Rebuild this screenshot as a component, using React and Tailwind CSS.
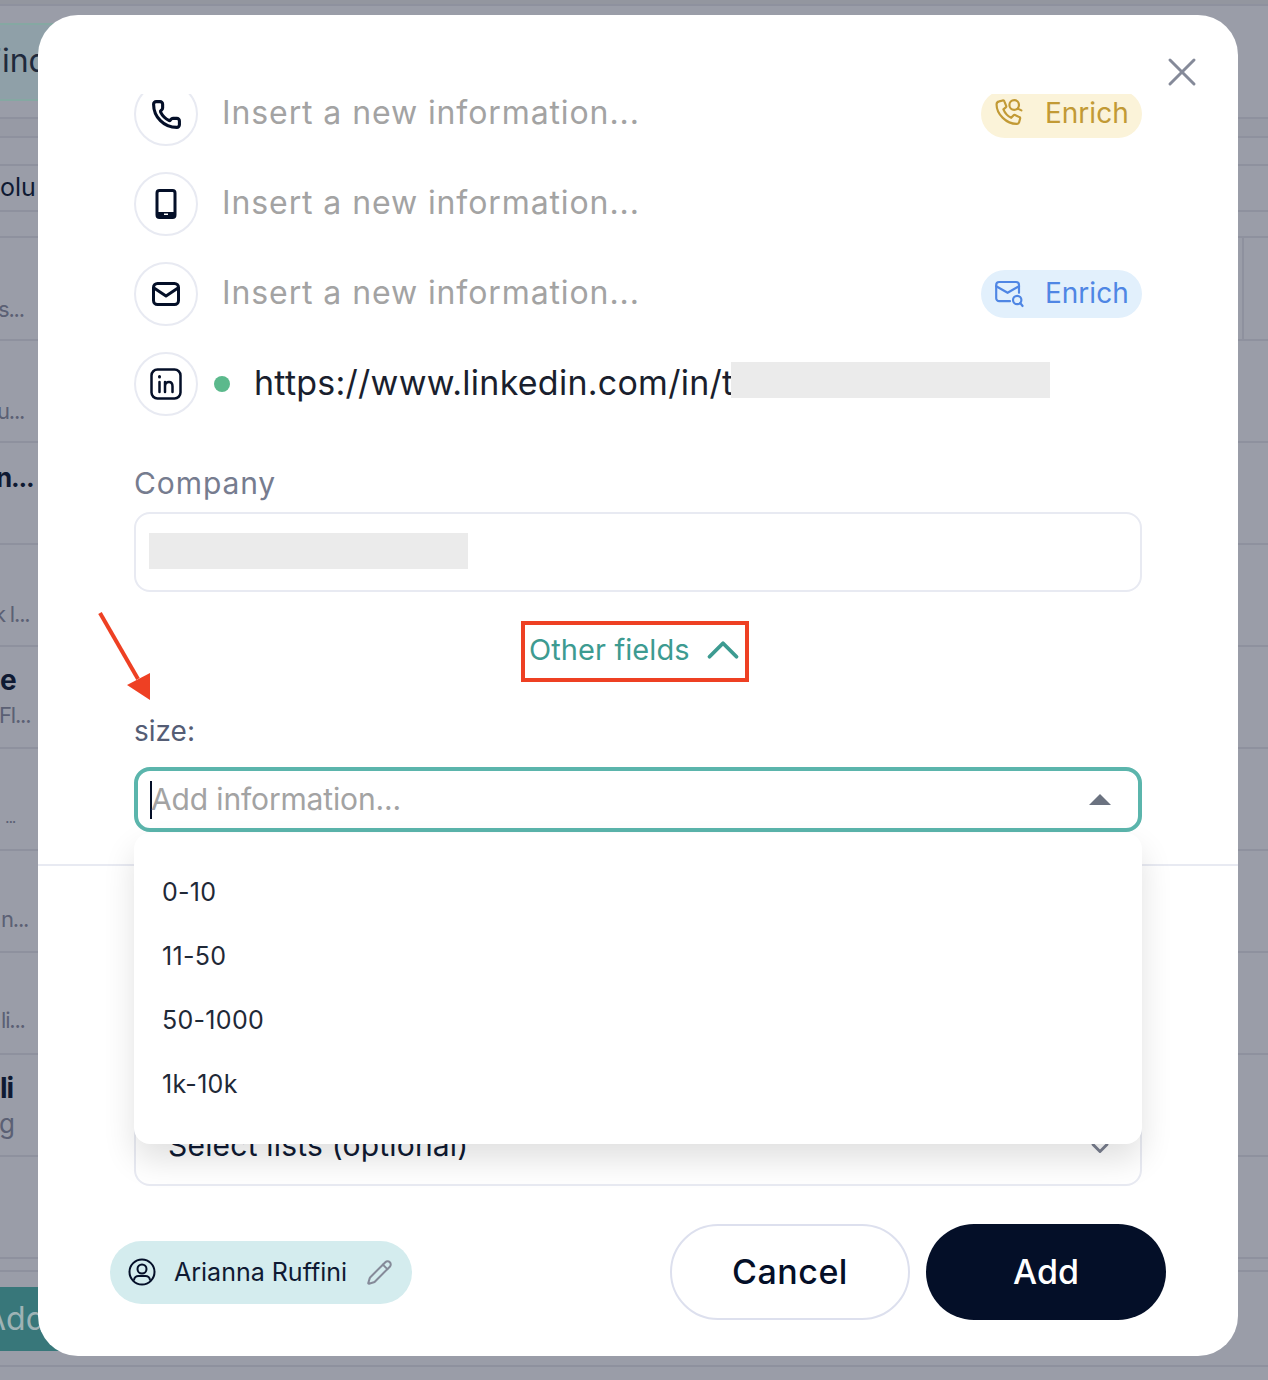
import React from 'react';
import { X, ChevronUp, ChevronDown, Phone, Pencil } from 'lucide-react';

const font = { fontFamily: 'Inter, "Noto Sans", sans-serif' };

const PhoneSearchIcon = () => (
  <svg width="36" height="36" viewBox="0 0 30 30" fill="none" stroke="currentColor" strokeWidth="1.800" strokeLinecap="round" strokeLinejoin="round">
    <path d="M6 4.500l3-.8c.6-.1 1.100.1 1.300.7l1.500 3.800c.2.500.1 1-.3 1.300l-2 1.700c1.200 3 3.600 5.600 6.500 7l1.800-2c.4-.4.900-.5 1.400-.3l3.600 1.700c.5.200.8.800.600 1.300l-.8 3c-.2.800-.9 1.300-1.700 1.300C12 23.500 3.800 15 3.800 7c0-1.200.9-2.200 2.200-2.500z" />
    <circle cx="18.500" cy="7.500" r="4" />
    <path d="M21.500 10.500l3 1.500" />
  </svg>
);

const MailSearchIcon = () => (
  <svg width="36" height="36" viewBox="0 0 30 30" fill="none" stroke="currentColor" strokeWidth="1.800" strokeLinecap="round" strokeLinejoin="round">
    <path d="M15 21H6a2.500 2.500 0 0 1-2.500-2.500v-11A2.500 2.500 0 0 1 6 5h14a2.500 2.500 0 0 1 2.500 2.500V14" />
    <path d="M3.500 8.500L13 14l9.500-5.500" />
    <circle cx="21" cy="20" r="3.500" />
    <path d="M23.500 22.500l2 2.500" />
  </svg>
);

const MobileIcon = () => (
  <svg width="22" height="30" viewBox="0 0 22 30" fill="none">
    <rect x="2" y="1.500" width="18" height="27" rx="2.500" stroke="#040f28" strokeWidth="3" />
    <rect x="2" y="23" width="18" height="5" fill="#040f28" />
    <rect x="9" y="24.500" width="4" height="1.500" fill="#fff" />
  </svg>
);

const MailIcon = () => (
  <svg width="28" height="24" viewBox="0 0 28 24" fill="none" stroke="#040f28" strokeWidth="3" strokeLinejoin="round" strokeLinecap="round">
    <rect x="1.500" y="1.500" width="25" height="21" rx="4" />
    <path d="M2 6l12 8 12-8" />
  </svg>
);

const LinkedinIcon = () => (
  <svg width="32" height="32" viewBox="0 0 32 32" fill="none" stroke="#040f28" strokeWidth="2.500" strokeLinecap="round">
    <rect x="1.500" y="1.500" width="29" height="29" rx="6" />
    <path d="M9.500 14v10" />
    <path d="M9.500 8.500v.5" strokeWidth="3" />
    <path d="M15 24V14M15 18.500c0-3 2-4.500 4-4.500s3.500 1.500 3.500 4.500V24" />
  </svg>
);

const UserCircleIcon = () => (
  <svg width="28" height="28" viewBox="0 0 28 28" fill="none" stroke="#040f28" strokeWidth="2">
    <circle cx="14" cy="14" r="12.500" />
    <circle cx="14" cy="11" r="4.500" />
    <path d="M6 22.500c0-3 2.500-4.500 4.500-4.500h7c2 0 4.500 1.500 4.500 4.500" />
  </svg>
);

const Circle = ({ children }) => (
  <div className="w-16 h-16 shrink-0 rounded-full border-2 border-[#e8eaf2] flex items-center justify-center">{children}</div>
);

const Placeholder = () => (
  <span className="ml-6 -mt-[2px] text-[32px] tracking-[0.9px] text-[#a3a3a3]">Insert a new information...</span>
);

const Row = ({ icon, children }) => (
  <div className="flex items-center h-16">
    <Circle>{icon}</Circle>
    {children}
  </div>
);

const Enrich = ({ className, icon }) => (
  <div className={`ml-auto w-[161px] h-12 rounded-full flex items-center pl-[11px] gap-[17px] text-[28px] ${className}`}>
    {icon}
    <span className="-mt-[3px]">Enrich</span>
  </div>
);

const BgText = ({ className, children }) => (
  <div className={`whitespace-nowrap leading-none tracking-[-1.2px] ${className}`}>{children}</div>
);

// the dimmed page behind the modal, only its left edge shows
const Backdrop = () => (
  <div className="flex flex-col h-[1380px] overflow-hidden bg-[#9a9da8] text-[#5b6074] text-[22px]">
    <div className="h-[6px] shrink-0 bg-[#93969f] border-b-2 border-[#8e919e]" />
    <div className="h-[113px] shrink-0 border-b-2 border-[#8e919e] pt-[17px]">
      <div className="w-[60px] h-[78px] bg-[#8fa0a8] border-y-2 border-[#85a8a2] flex items-center text-[#1f2a3c] text-[32px]">
        <span className="-ml-[17px] -mt-[2px]">Find</span>
      </div>
    </div>
    <div className="h-[19px] shrink-0 border-b-2 border-[#8e919e] bg-[#979aa5]" />
    <div className="h-[100px] shrink-0 border-b-2 border-[#8e919e] pt-[26px]">
      <div className="h-[48px] border-y-2 border-[#8e919e] flex items-center text-[#0f1a33] text-[25px]">olu</div>
    </div>
    <div className="h-[103px] shrink-0 border-b-2 border-[#8e919e] pt-[60px] flex justify-between">
      <BgText className="-ml-[2px]">s...</BgText>
      <div className="w-[26px] h-[103px] -mt-[60px] border-l-2 border-[#8e919e]" />
    </div>
    <div className="h-[102px] shrink-0 border-b-2 border-[#8e919e] pt-[59px]"><BgText className="-ml-[3px]">u...</BgText></div>
    <div className="h-[102px] shrink-0 border-b-2 border-[#8e919e] pt-[22px]"><BgText className="-ml-[4px] font-bold text-[#0f1a33] text-[26px]">n...</BgText></div>
    <div className="h-[102px] shrink-0 border-b-2 border-[#8e919e] pt-[58px]"><BgText className="-ml-[6px]">k l...</BgText></div>
    <div className="h-[102px] shrink-0 border-b-2 border-[#8e919e] pt-[19px]">
      <BgText className="font-bold text-[#0f1a33] text-[28px]">e</BgText>
      <BgText className="mt-[10px] -ml-[1px]">Fl...</BgText>
    </div>
    <div className="h-[102px] shrink-0 border-b-2 border-[#8e919e] pt-[60px]"><BgText className="ml-[5px] text-[16px]">...</BgText></div>
    <div className="h-[102px] shrink-0 border-b-2 border-[#8e919e] pt-[57px]"><BgText className="ml-[1px]">n...</BgText></div>
    <div className="h-[102px] shrink-0 border-b-2 border-[#8e919e] pt-[56px]"><BgText className="ml-[1px]">li...</BgText></div>
    <div className="h-[102px] shrink-0 border-b-2 border-[#8e919e] pt-[19px]">
      <BgText className="font-bold text-[#0f1a33] text-[28px]">li</BgText>
      <BgText className="mt-[9px] -ml-[1px] text-[26px]">g</BgText>
    </div>
    <div className="h-[102px] shrink-0 border-b-2 border-[#8e919e]" />
    <div className="h-[13px] shrink-0 border-b-2 border-[#8e919e]" />
    <div className="h-[95px] shrink-0 border-b-2 border-[#8e919e] pt-[15px]">
      <div className="w-[60px] h-[64px] bg-[#38777a] flex items-center text-[#9fb3b5] text-[32px]">
        <span className="-ml-[16px]">Add</span>
      </div>
    </div>
  </div>
);

const Arrow = () => (
  <svg className="absolute left-[98px] top-[611px]" width="56" height="92" viewBox="0 0 56 92" fill="none">
    <path d="M2 2l38 66" stroke="#ee4023" strokeWidth="4" />
    <path d="M52 89L29 74l23-12z" fill="#ee4023" />
  </svg>
);

export default function App() {
  return (
    <div className="relative w-[1268px] h-[1380px] overflow-hidden" style={font}>
      <Backdrop />

      <div className="absolute left-[38px] top-[15px] w-[1200px] h-[1341px] bg-white rounded-[40px] pt-[79px] flex flex-col">
        <button className="absolute right-[32px] top-[33px] text-[#858a99]">
          <X size={48} strokeWidth={1.5} />
        </button>

        {/* scrolling part, cut at the top */}
        <div className="h-[772px] shrink-0 overflow-hidden border-b-2 border-[#e8eaf2] px-[96px]">
          <div className="-mt-[12px] flex flex-col gap-[26px]">
            <Row icon={<Phone size={31} color="#040f28" strokeWidth={2.4} />}>
              <Placeholder />
              <Enrich className="bg-[#fbf3d9] text-[#c29a35]" icon={<PhoneSearchIcon />} />
            </Row>
            <Row icon={<MobileIcon />}>
              <Placeholder />
            </Row>
            <Row icon={<MailIcon />}>
              <Placeholder />
              <Enrich className="bg-[#e2f0fc] text-[#4f86e4]" icon={<MailSearchIcon />} />
            </Row>
            <Row icon={<LinkedinIcon />}>
              <span className="ml-4 w-4 h-4 rounded-full bg-[#5bb98c]" />
              <div className="ml-[24px] -mt-[3px] flex items-center">
                <span className="text-[34px] tracking-[0.25px] text-[#1a1f2e] whitespace-nowrap">https://www.linkedin.com/in/t</span>
                <div className="w-[319px] h-9 bg-[#ebebeb] -ml-[2px] -mt-[6px]" />
              </div>
            </Row>
          </div>

          <div className="mt-[49px] text-[30px] leading-[36px] tracking-[0.9px] text-[#767c8f]">Company</div>
          <div className="mt-[11px] h-20 rounded-2xl border-2 border-[#e8eaf2] flex items-center pl-[13px]">
            <div className="w-[319px] h-9 bg-[#ebebeb] -mt-[2px]" />
          </div>

          <div className="mt-[29px] flex justify-center">
            <div className="w-[228px] h-[61px] -ml-[6px] border-4 border-[#ee4023] flex items-center pl-[4px] text-[#3d9b91] text-[29px]">
              <span className="whitespace-nowrap tracking-[0.1px] -mt-[4px]">Other fields</span>
              <ChevronUp size={54} strokeWidth={1.7} className="ml-auto -mr-[5px] shrink-0 -mt-[4px]" />
            </div>
          </div>

          <div className="mt-[31px] text-[28px] leading-[36px] text-[#555d75]">size:</div>
          <div className="mt-[18px] h-[65px] rounded-2xl border-4 border-[#5bb5ac] flex items-center pl-3">
            <div className="w-[2px] h-[38px] bg-[#040f28]" />
            <span className="-ml-[1px] text-[30px] text-[#a3a3a3] tracking-[-0.15px]">Add information...</span>
            <div className="ml-auto mr-[27px] w-0 h-0 border-x-[11px] border-x-transparent border-b-[11px] border-b-[#6b7280]" />
          </div>
        </div>

        {/* lists field, the open menu covers most of it */}
        <div className="mt-[240px] mx-[96px] h-20 rounded-2xl border-2 border-[#e8eaf2] flex items-center pl-8 pr-[26px] text-[#0f1a33] text-[30px]">
          <span className="whitespace-nowrap tracking-[0.2px] -mt-[2px]">Select lists (optional)</span>
          <ChevronDown size={28} strokeWidth={2.5} color="#7b8091" className="ml-auto mt-[4px]" />
        </div>

        <div className="mt-[38px] px-[72px] flex items-center">
          <div className="w-[302px] h-[63px] rounded-full bg-[#d4ecee] flex items-center pl-[18px] text-[#0f1a33] text-[25px]">
            <UserCircleIcon />
            <span className="ml-[18px] mt-[2px] whitespace-nowrap">Arianna Ruffini</span>
            <Pencil size={27} strokeWidth={1.8} color="#858a99" className="ml-auto mr-[19px]" />
          </div>
          <button className="ml-auto w-[240px] h-24 pb-[2px] rounded-full border-2 border-[#dde0ee] text-[#040f28] text-[34px] tracking-[0.5px] font-medium">Cancel</button>
          <button className="ml-4 w-[240px] h-24 pb-[2px] rounded-full bg-[#040f28] text-white text-[34px] font-medium">Add</button>
        </div>

        {/* open dropdown */}
        <div className="absolute left-[96px] top-[818px] w-[1008px] h-[311px] bg-white rounded-2xl shadow-[0_16px_32px_rgba(0,0,0,0.12)] pt-[28px] text-[25px] text-[#1f2937] tracking-[0.3px]">
          <div className="h-16 flex items-center pl-7">0-10</div>
          <div className="h-16 flex items-center pl-7">11-50</div>
          <div className="h-16 flex items-center pl-7">50-1000</div>
          <div className="h-16 flex items-center pl-7">1k-10k</div>
        </div>
      </div>

      <Arrow />
    </div>
  );
}
